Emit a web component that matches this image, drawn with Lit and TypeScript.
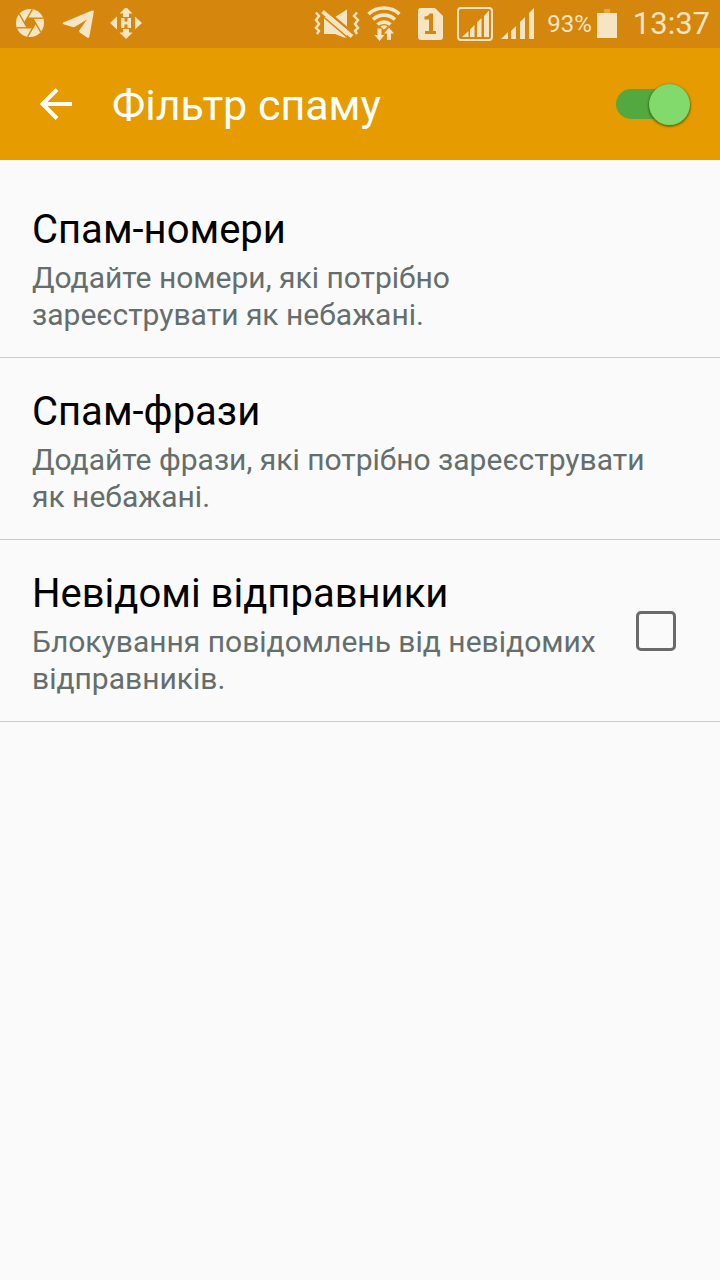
import { LitElement, html, css, svg } from "lit";
import { customElement, property, state } from "lit/decorators.js";

@customElement("status-bar")
export class StatusBar extends LitElement {
  static styles = css`
    :host {
      display: flex;
      align-items: center;
      justify-content: space-between;
      height: 48px;
      padding: 0 10px 0 14px;
      background: #d5860c;
      color: #f6e5c4;
      font-family: Roboto, "Noto Sans", sans-serif;
    }
    .group {
      display: flex;
      align-items: center;
    }
    .apps {
      gap: 16px;
    }
    svg {
      display: block;
      fill: #f6e5c4;
    }
    .battery {
      font-size: 24px;
      line-height: 32px;
      margin: 0 5px 0 12px;
    }
    .clock {
      font-size: 31px;
      line-height: 40px;
      margin-left: 16px;
    }
    .sim {
      margin: 0 14px 0 16px;
    }
    .bars {
      margin-left: 8px;
    }
  `;

  render() {
    return html`
      <div class="group apps">
        <svg width="32" height="32" viewBox="0 0 32 32" aria-hidden="true">
          <circle cx="16" cy="15" r="14" />
          <g stroke="#d5860c" stroke-width="1.4" fill="none">
            ${[0, 60, 120, 180, 240, 300].map(
              (a) => svg`<path d="M13 10.2 H29" transform="rotate(${a} 16 15)" />`
            )}
          </g>
          <path d="M13.2 10h5.6l2.8 5-2.8 5h-5.6l-2.8-5z" fill="#d5860c" />
        </svg>
        <svg width="32" height="32" viewBox="0 0 32 32" aria-hidden="true">
          <path
            d="M1.2 14.6 30 2.6c1.4-.5 2 .2 1.8 1.3L27.4 28.6c-.3 1.4-1.2 1.7-2.3 1l-7.3-5.2c-1-.8-1-1.6-.2-2.4L25 11.4 13.5 18.6c-1 .6-2 .7-3 .4l-9-2.8c-1-.4-1.1-1.2-.3-1.6z"
          />
        </svg>
        <svg width="32" height="32" viewBox="0 0 32 32" aria-hidden="true">
          <path
            d="M16-1l6.500 6.500H19V9h-6V5.500H9.500zM16 31l-6.500-6.500H13V21h6v3.500h3.500zM0 15l7-6.500v13zM32 15l-7-6.500v13z"
          />
          <path d="M11 10h3.500v3.500h3V10H21v10h-3.500v-3.500h-3V20H11z" />
        </svg>
      </div>
      <div class="group">
        <svg width="48" height="32" viewBox="0 0 48 32" aria-hidden="true">
          <path d="M10 9h11L33 1.500v28h-3L21 26H10z" />
          <path d="M11.500 2 41 27" stroke="#d5860c" stroke-width="2.600" />
          <path d="M8.500 3.500 38 28.500" stroke="#f6e5c4" stroke-width="4" />
          <path d="M6 6 36 31.500" stroke="#d5860c" stroke-width="1.600" />
          <path
            d="M2 4.500 5 8 2 12l3 4-3 4 3 3-2 3M43 4.500 40 8l4 4-3 4 3 4-3 3 2 3"
            fill="none"
            stroke="#f6e5c4"
            stroke-width="2.4"
          />
        </svg>
        <svg width="40" height="36" viewBox="-3 0 40 36" aria-hidden="true">
          <g fill="none" stroke="#f6e5c4" stroke-width="3.6">
            <path d="M3.500 8a23 23 0 0 1 31 0" />
            <path d="M8 13.500a16 16 0 0 1 22 0" />
            <path d="M12.500 18.500a10 10 0 0 1 13 0" />
          </g>
          <path d="M15.500 20.500a6 6 0 0 1 7 0l-3.500 3z" />
          <path d="M12.500 22.500h4V29h3l-5 6-5-6h3zM22 34v-6.500h-3l5-6 5 6h-3V34z" />
        </svg>
        <svg class="sim" width="25" height="32" viewBox="0 0 25 32" aria-hidden="true">
          <path d="M3 0h14l8 8v21a3 3 0 0 1-3 3H3a3 3 0 0 1-3-3V3a3 3 0 0 1 3-3z" />
          <path
            d="M6.500 8.500c3-.3 4.500-1.300 5-3H15v17.500h3V26H7v-3h4V11.500H6.500z"
            fill="#d5860c"
          />
        </svg>
        <svg width="36" height="34" viewBox="0 0 36 34" aria-hidden="true">
          <rect x="1" y="1" width="34" height="32" rx="3" fill="none" stroke="#f6e5c4" stroke-width="2" />
          <path d="M5 30l6.500-6V30zM13 22.500l4.500-4.500v12H13zM20 15.500l4.500-4.500v19H20zM27 9l5-5.500V30h-5z" />
        </svg>
        <svg class="bars" width="34" height="34" viewBox="0 0 34 34" aria-hidden="true">
          <path d="M0 32l7-7v7zM10 24l5-5v13h-5zM19 15l5-5v22h-5zM28 6l5-5v31h-5z" />
        </svg>
        <span class="battery">93%</span>
        <svg width="20" height="30" viewBox="0 0 20 30" aria-hidden="true">
          <path d="M7 0h6v4H7z" opacity=".35" />
          <path d="M0 4h20v25H0z" />
        </svg>
        <span class="clock">13:37</span>
      </div>
    `;
  }
}

@customElement("setting-row")
export class SettingRow extends LitElement {
  @property() heading = "";
  @property() summary = "";
  @property({ type: Boolean }) checkable = false;

  static styles = css`
    :host {
      display: block;
      border-bottom: 1px solid #cacaca;
      font-family: Roboto, "Noto Sans", sans-serif;
    }
    .row {
      display: flex;
      align-items: center;
      gap: 32px;
      box-sizing: border-box;
      width: 100%;
      padding: 0 64px 0 32px;
      border: 0;
      background: none;
      font: inherit;
      text-align: left;
      cursor: pointer;
    }
    .checkable {
      padding-right: 44px;
    }
    .text {
      display: flex;
      flex: 1;
      flex-direction: column;
      gap: 4px;
      min-width: 0;
      padding: 29px 0 24px;
    }
    .heading {
      color: #000;
      font-size: 40px;
      line-height: 50px;
    }
    .summary {
      color: #646e6c;
      font-size: 30px;
      line-height: 37px;
    }
    .box {
      appearance: none;
      flex: none;
      box-sizing: border-box;
      width: 40px;
      height: 40px;
      margin: 0;
      border: 3px solid #6a6a6a;
      border-radius: 5px;
    }
    .box:checked {
      background: #6a6a6a;
    }
  `;

  render() {
    const text = html`<span class="text">
      <span class="heading">${this.heading}</span>
      <span class="summary">${this.summary}</span>
    </span>`;
    return this.checkable
      ? html`<label class="row checkable">${text}<input class="box" type="checkbox" /></label>`
      : html`<button class="row" type="button">${text}</button>`;
  }
}

@customElement("app-root")
export class AppRoot extends LitElement {
  @state() private enabled = true;

  static styles = css`
    :host {
      display: block;
      min-height: 100vh;
      background: #fafafa;
      font-family: Roboto, "Noto Sans", sans-serif;
    }
    .bar {
      display: flex;
      align-items: center;
      height: 112px;
      padding: 0 30px 0 32px;
      background: #e69c00;
      color: #fff;
    }
    .back {
      display: grid;
      place-items: center;
      width: 48px;
      height: 48px;
      margin-right: 32px;
      padding: 0;
      border: 0;
      background: none;
    }
    .title {
      flex: 1;
      margin: 0;
      padding-top: 2px;
      font-size: 43px;
      font-weight: 400;
      line-height: 50px;
    }
    .switch {
      appearance: none;
      display: flex;
      align-items: center;
      width: 74px;
      height: 30px;
      margin: 0;
      border-radius: 15px;
      background: linear-gradient(to right, #54a840 60px, transparent 60px);
    }
    .switch::before {
      content: "";
      width: 41px;
      height: 41px;
      flex: none;
      border-radius: 50%;
      background: #f1f1f1;
      box-shadow: 0 1px 2px 1px rgba(40, 80, 10, 0.6);
    }
    .switch:checked::before {
      margin-left: auto;
      background: #82d96c;
    }
    .list {
      padding-top: 16px;
    }
  `;

  render() {
    return html`
      <status-bar></status-bar>
      <header class="bar">
        <button class="back" type="button" aria-label="Назад">
          <svg width="32" height="32" viewBox="0 0 32 32" fill="none" stroke="#fff" stroke-width="4" aria-hidden="true">
            <path d="M32 16H4M17 1.5 2.5 16 17 30.5" />
          </svg>
        </button>
        <h1 class="title">Фільтр спаму</h1>
        <input
          class="switch"
          type="checkbox"
          role="switch"
          aria-label="Фільтр спаму"
          .checked=${this.enabled}
          @change=${(e: Event) => (this.enabled = (e.target as HTMLInputElement).checked)}
        />
      </header>
      <main class="list">
        <setting-row heading="Спам-номери" summary="Додайте номери, які потрібно зареєструвати як небажані."></setting-row>
        <setting-row heading="Спам-фрази" summary="Додайте фрази, які потрібно зареєструвати як небажані."></setting-row>
        <setting-row
          heading="Невідомі відправники"
          summary="Блокування повідомлень від невідомих відправників."
          checkable
        ></setting-row>
      </main>
    `;
  }
}
